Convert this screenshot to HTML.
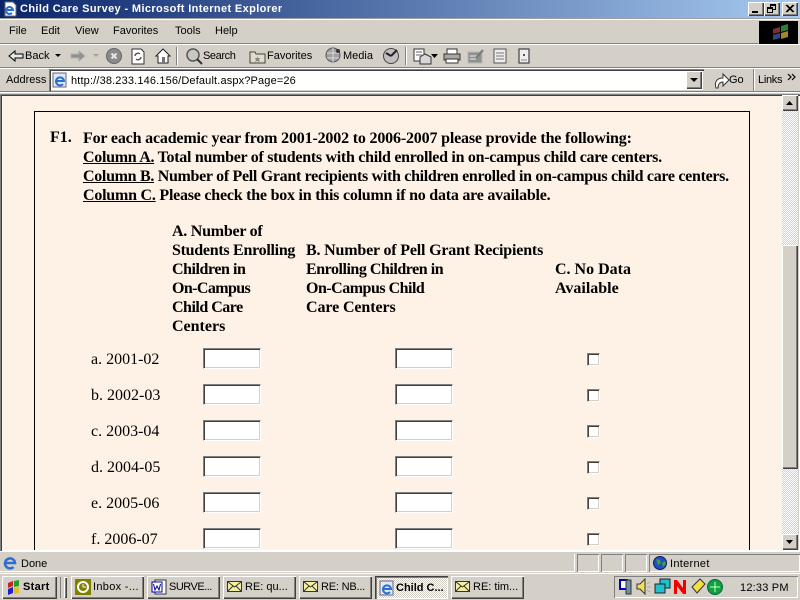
<!DOCTYPE html>
<html><head><meta charset="utf-8"><title>Child Care Survey</title>
<style>
html,body{margin:0;padding:0;width:800px;height:600px;overflow:hidden;background:#d4d0c8}
div,span.t{position:absolute;box-sizing:border-box}
.t{white-space:pre;font:11px/13px "Liberation Sans",sans-serif;color:#000}
.s{font:bold 16px/19px "Liberation Serif",serif;color:#000;white-space:pre;position:absolute}
.n{font:16px/19px "Liberation Serif",serif;color:#000;white-space:pre;position:absolute}
.u{text-decoration:underline}
.in{width:58px;height:21px;background:#fff;border:1px solid;border-color:#808080 #fff #fff #808080;box-shadow:inset 1px 1px 0 #404040,inset -1px -1px 0 #d4d0c8}
.cb{width:13px;height:13px;background:#fff;border:1px solid;border-color:#808080 #fff #fff #808080;box-shadow:inset 1px 1px 0 #404040,inset -1px -1px 0 #d4d0c8}
.btn{background:#d4d0c8;box-shadow:inset 1px 1px 0 #fff,inset -1px -1px 0 #404040,inset -2px -2px 0 #808080}
.sep{background:#fff}
.tb{height:23px;top:576px;width:73px;background:#d4d0c8;box-shadow:inset 1px 1px 0 #fff,inset -1px -1px 0 #404040,inset -2px -2px 0 #808080}
.tb .t{left:22px;top:5px}
svg{position:absolute}
.pn{top:554px;height:18px;box-shadow:inset 1px 1px 0 #808080,inset -1px -1px 0 #fff}
.dith{background-color:#fff;background-image:conic-gradient(#d4d0c8 25%,#fff 0 50%,#d4d0c8 0 75%,#fff 0);background-size:2px 2px}
</style></head><body>
<!-- title bar -->
<div style="left:0;top:0;width:800px;height:18px;background:linear-gradient(90deg,#0a246a 0%,#a6caf0 100%)"></div>
<svg style="left:2px;top:1px" width="16" height="16" viewBox="0 0 16 16"><path d="M3 1h8l3 3v11H3z" fill="#fff" stroke="#667"/><path d="M4 9h7a3.500 3.500 0 1 0-1 3" fill="none" stroke="#2a6fd0" stroke-width="2"/></svg>
<span class="t" style="position:absolute;left:20px;top:3px;color:#fff;font-weight:bold;letter-spacing:.37px">Child Care Survey - Microsoft Internet Explorer</span>
<div class="btn" style="left:748px;top:2px;width:16px;height:14px"><div style="left:4px;top:9px;width:6px;height:2px;background:#000"></div></div>
<div class="btn" style="left:764px;top:2px;width:16px;height:14px"><div style="left:6px;top:2px;width:6px;height:6px;border:1px solid #000;border-top-width:2px"></div><div style="left:3px;top:5px;width:6px;height:6px;border:1px solid #000;border-top-width:2px;background:#d4d0c8"></div></div>
<div class="btn" style="left:782px;top:2px;width:16px;height:14px"><svg width="16" height="14"><path d="M4 3l7 7M5 3l7 7M11 3l-7 7M12 3l-7 7" stroke="#000"/></svg></div>
<!-- menu -->
<div style="left:0;top:18px;width:800px;height:1px;background:#a0a0a0"></div>
<div class="sep" style="left:0;top:19px;width:800px;height:1px"></div>
<span class="t" style="position:absolute;left:9px;top:25px">File</span>
<span class="t" style="position:absolute;left:41px;top:25px">Edit</span>
<span class="t" style="position:absolute;left:75px;top:25px">View</span>
<span class="t" style="position:absolute;left:113px;top:25px">Favorites</span>
<span class="t" style="position:absolute;left:175px;top:25px">Tools</span>
<span class="t" style="position:absolute;left:215px;top:25px">Help</span>
<div style="left:759px;top:21px;width:39px;height:23px;background:#000"></div>
<svg style="left:771px;top:23px" width="20" height="18" viewBox="0 0 20 18"><path d="M2 6l7-2v5l-7 2z" fill="#803028"/><path d="M10 3l7-2v6l-7 2z" fill="#308030"/><path d="M2 12l7-2v5l-7 2z" fill="#304880"/><path d="M10 10l7-2v6l-7 2z" fill="#a08828"/></svg>
<div style="left:0;top:43px;width:758px;height:1px;background:#808080"></div>
<div class="sep" style="left:0;top:44px;width:800px;height:1px"></div>
<!-- toolbar -->
<svg style="left:8px;top:49px" width="16" height="14"><path d="M1 7l6-5v3h8v4H7v3z" fill="#e8e8e8" stroke="#000"/></svg>
<span class="t" style="position:absolute;left:25px;top:50px">Back</span>
<svg style="left:54px;top:53px" width="8" height="6"><path d="M1 1h6L4 4z" fill="#000"/></svg>
<svg style="left:70px;top:49px" width="16" height="14"><path d="M15 7L9 2v3H1v4h8v3z" fill="#909090" stroke="#b0b0b0"/></svg>
<svg style="left:92px;top:53px" width="8" height="6"><path d="M1 1h6L4 4z" fill="#a0a0a0"/></svg>
<svg style="left:106px;top:48px" width="16" height="16"><circle cx="8" cy="8" r="7.500" fill="#8a8a8a" stroke="#666"/><path d="M5.500 5.500l5 5M10.500 5.500l-5 5" stroke="#e8e8e8" stroke-width="2"/></svg>
<svg style="left:130px;top:48px" width="16" height="17"><path d="M2 1h9l3 3v12H2z" fill="#fff" stroke="#333"/><path d="M5 8a3 3 0 0 1 5-2M11 9a3 3 0 0 1-5 2" fill="none" stroke="#555" stroke-width="1.400"/></svg>
<svg style="left:155px;top:48px" width="16" height="16"><path d="M1 8l7-7 7 7h-2v7H3V8z" fill="#fff" stroke="#222"/><rect x="7" y="9" width="3" height="6" fill="#777"/></svg>
<div style="left:176px;top:47px;width:2px;height:18px;background:#808080;border-right:1px solid #fff"></div>
<svg style="left:185px;top:47px" width="18" height="18"><circle cx="8" cy="8" r="6" fill="#c8c8c0" stroke="#555" stroke-width="1.500"/><path d="M12 12l5 5" stroke="#333" stroke-width="2"/></svg>
<span class="t" style="position:absolute;left:203px;top:50px;letter-spacing:-.4px">Search</span>
<svg style="left:249px;top:49px" width="17" height="15"><path d="M1 3h5l1 2h9v9H1z" fill="#e0dcc8" stroke="#444"/><path d="M8 7l1 2 2 0-1 2 1 2-3-1-2 1 1-2-1-2 2 0z" fill="#888"/></svg>
<span class="t" style="position:absolute;left:267px;top:50px">Favorites</span>
<svg style="left:325px;top:47px" width="17" height="17"><circle cx="8" cy="8" r="7" fill="#a0a0a0" stroke="#555"/><path d="M2 6h12M2 11h12M8 1v14" stroke="#ddd"/><circle cx="13" cy="4" r="2" fill="#333"/></svg>
<span class="t" style="position:absolute;left:343px;top:50px">Media</span>
<svg style="left:383px;top:47px" width="17" height="18"><circle cx="8" cy="9" r="7.500" fill="#c0c0c0" stroke="#444"/><path d="M8 9L3 6M8 9l6-6" stroke="#222" stroke-width="2"/></svg>
<div style="left:405px;top:47px;width:2px;height:18px;background:#808080;border-right:1px solid #fff"></div>
<svg style="left:413px;top:48px" width="20" height="18"><rect x="1" y="1" width="10" height="12" fill="#fff" stroke="#333"/><path d="M3 4h6M3 7h6" stroke="#666"/><path d="M7 9l5-3 6 3v7H7z" fill="#d8d8d8" stroke="#333"/></svg>
<svg style="left:431px;top:54px" width="7" height="5"><path d="M0 0h7L3.500 4z" fill="#000"/></svg>
<svg style="left:443px;top:48px" width="18" height="16"><rect x="4" y="1" width="10" height="6" fill="#fff" stroke="#333"/><rect x="1" y="6" width="16" height="6" fill="#a8a8a0" stroke="#333"/><rect x="3" y="11" width="12" height="4" fill="#fff" stroke="#333"/></svg>
<svg style="left:467px;top:48px" width="18" height="16"><rect x="1" y="4" width="14" height="11" fill="#909090" stroke="#b8b8b8"/><path d="M3 8h8M3 11h6" stroke="#eee"/><path d="M9 10l7-8" stroke="#777" stroke-width="2"/></svg>
<svg style="left:492px;top:48px" width="16" height="17"><rect x="2" y="1" width="12" height="14" fill="#eee" stroke="#555"/><path d="M4 5h8M4 8h8M4 11h8" stroke="#777"/></svg>
<svg style="left:518px;top:48px" width="13" height="16"><rect x="1" y="1" width="10" height="14" fill="#eee" stroke="#222"/><path d="M5 7h2M6 6v2" stroke="#222"/><path d="M3 12h6" stroke="#888"/></svg>
<div style="left:0;top:67px;width:800px;height:1px;background:#808080"></div>
<div class="sep" style="left:0;top:68px;width:800px;height:1px"></div>
<!-- address -->
<span class="t" style="position:absolute;left:6px;top:74px">Address</span>
<div style="left:49px;top:69px;width:655px;height:22px;background:#fff;box-shadow:inset 1px 1px 0 #808080,inset 2px 2px 0 #404040,inset -1px -1px 0 #d4d0c8"></div>
<svg style="left:52px;top:72px" width="16" height="16"><rect x="1" y="1" width="13" height="14" fill="#dfe8f8" stroke="#667"/><path d="M4 9h8a4 4 0 1 0-1 3" fill="none" stroke="#2a6fd0" stroke-width="2"/></svg>
<span class="t" style="position:absolute;left:71px;top:75px;letter-spacing:.15px">http://38.233.146.156/Default.aspx?Page=26</span>
<div class="btn" style="left:686px;top:71px;width:16px;height:18px"><svg style="left:3px;top:6px" width="10" height="6"><path d="M1 1h8L5 5z" fill="#000"/></svg></div>
<svg style="left:713px;top:71px" width="18" height="19"><path d="M3 17c-2-6 1-10 7-10V3l6 6-6 6v-4c-3 0-5 2-5 6z" fill="#fff" stroke="#333"/></svg>
<span class="t" style="position:absolute;left:729px;top:74px">Go</span>
<div style="left:753px;top:69px;width:2px;height:22px;background:#808080;border-right:1px solid #fff"></div>
<span class="t" style="position:absolute;left:758px;top:74px;letter-spacing:-.3px">Links</span>
<svg style="left:787px;top:73px" width="10" height="8"><path d="M1 1l3 3-3 3M5 1l3 3-3 3" fill="none" stroke="#000" stroke-width="1.200"/></svg>
<div style="left:0;top:91px;width:800px;height:1px;background:#808080"></div>
<div class="sep" style="left:0;top:92px;width:800px;height:1px"></div>
<!-- content -->
<div style="left:0;top:94px;width:800px;height:457px;background:#d4d0c8;box-shadow:inset 1px 1px 0 #808080,inset 2px 2px 0 #404040,inset -1px -1px 0 #fff"></div>
<div id="page" style="left:2px;top:96px;width:780px;height:454px;background:#fef2e6;overflow:hidden">
<div style="left:32px;top:15px;width:716px;height:460px;border:1px solid #000"></div>
<span class="s" style="left:48px;top:32px">F1.</span>
<span class="s" style="left:81px;top:33px;letter-spacing:-.175px">For each academic year from 2001-2002 to 2006-2007 please provide the following:</span>
<span class="s" style="left:81px;top:52px;letter-spacing:-.29px"><span class="u">Column A.</span> Total number of students with child enrolled in on-campus child care centers.</span>
<span class="s" style="left:81px;top:71px;letter-spacing:-.31px"><span class="u">Column B.</span> Number of Pell Grant recipients with children enrolled in on-campus child care centers.</span>
<span class="s" style="left:81px;top:90px;letter-spacing:-.23px"><span class="u">Column C.</span> Please check the box in this column if no data are available.</span>
<span class="s" style="left:170px;top:126px;letter-spacing:-.25px">A. Number of</span>
<span class="s" style="left:170px;top:145px;letter-spacing:-.28px">Students Enrolling</span>
<span class="s" style="left:170px;top:164px;letter-spacing:-.45px">Children in</span>
<span class="s" style="left:170px;top:183px;letter-spacing:-.6px">On-Campus</span>
<span class="s" style="left:170px;top:202px;letter-spacing:-.5px">Child Care</span>
<span class="s" style="left:170px;top:221px">Centers</span>
<span class="s" style="left:304px;top:145px;letter-spacing:-.18px">B. Number of Pell Grant Recipients</span>
<span class="s" style="left:304px;top:164px;letter-spacing:-.47px">Enrolling Children in</span>
<span class="s" style="left:304px;top:183px;letter-spacing:-.5px">On-Campus Child</span>
<span class="s" style="left:304px;top:202px;letter-spacing:-.1px">Care Centers</span>
<span class="s" style="left:553px;top:164px">C. No Data</span>
<span class="s" style="left:553px;top:183px">Available</span>
<span class="n" style="left:89px;top:254px">a. 2001-02</span><div class="in" style="left:201px;top:252px"></div><div class="in" style="left:393px;top:252px"></div><div class="cb" style="left:585px;top:257px"></div>
<span class="n" style="left:89px;top:290px">b. 2002-03</span><div class="in" style="left:201px;top:288px"></div><div class="in" style="left:393px;top:288px"></div><div class="cb" style="left:585px;top:293px"></div>
<span class="n" style="left:89px;top:326px">c. 2003-04</span><div class="in" style="left:201px;top:324px"></div><div class="in" style="left:393px;top:324px"></div><div class="cb" style="left:585px;top:329px"></div>
<span class="n" style="left:89px;top:362px">d. 2004-05</span><div class="in" style="left:201px;top:360px"></div><div class="in" style="left:393px;top:360px"></div><div class="cb" style="left:585px;top:365px"></div>
<span class="n" style="left:89px;top:398px">e. 2005-06</span><div class="in" style="left:201px;top:396px"></div><div class="in" style="left:393px;top:396px"></div><div class="cb" style="left:585px;top:401px"></div>
<span class="n" style="left:89px;top:434px">f. 2006-07</span><div class="in" style="left:201px;top:432px"></div><div class="in" style="left:393px;top:432px"></div><div class="cb" style="left:585px;top:437px"></div>
</div>
<!-- scrollbar -->
<div class="dith" style="left:782px;top:96px;width:16px;height:453px"></div>
<div class="btn" style="left:782px;top:95px;width:16px;height:16px"><svg width="16" height="16"><path d="M4 10h7L7.500 6z" fill="#000"/></svg></div>
<div class="btn" style="left:782px;top:245px;width:16px;height:224px"></div>
<div class="btn" style="left:782px;top:534px;width:16px;height:16px"><svg width="16" height="16"><path d="M4 6h7l-3.500 4z" fill="#000"/></svg></div>
<div class="sep" style="left:0;top:551px;width:800px;height:1px"></div>
<!-- status -->
<svg style="left:2px;top:554px" width="16" height="17"><path d="M3 9h10a5 5 0 1 0-1.500 4" fill="none" stroke="#2a6fd0" stroke-width="2.500"/></svg>
<span class="t" style="position:absolute;left:21px;top:558px">Done</span>
<div class="pn" style="left:0;width:575px;box-shadow:inset -1px -1px 0 #fff,inset -1px 0 0 #fff"></div>
<div class="pn" style="left:577px;width:22px"></div>
<div class="pn" style="left:601px;width:22px"></div>
<div class="pn" style="left:625px;width:22px"></div>
<div class="pn" style="left:649px;width:151px"></div>
<svg style="left:652px;top:555px" width="16" height="16"><circle cx="8" cy="8" r="6.500" fill="#2050c0" stroke="#102060"/><path d="M4 4l4 1 1 3-3 2zM10 8l3-2 1 3-3 3z" fill="#40a040"/></svg>
<span class="t" style="position:absolute;left:670px;top:558px;letter-spacing:.3px">Internet</span>
<!-- taskbar -->
<div class="sep" style="left:0;top:573px;width:800px;height:1px"></div>
<div class="tb" style="left:2px;width:55px"><svg style="left:4px;top:4px" width="16" height="15"><path d="M2 3l5-2v5l-5 2z" fill="#d02020"/><path d="M8 1l5-1v6l-5 1z" fill="#20a020"/><path d="M2 9l5-2v6l-5 2z" fill="#2020d0"/><path d="M8 8l5-1v6l-5 1z" fill="#e0c020"/></svg><span class="t" style="left:21px;font-weight:bold;letter-spacing:.3px">Start</span></div>
<div style="left:60px;top:577px;width:1px;height:21px;background:#808080"></div>
<div class="btn" style="left:64px;top:577px;width:3px;height:21px"></div>
<div class="tb" style="left:71px"><svg style="left:4px;top:3px" width="16" height="16"><rect width="16" height="16" fill="#808000"/><circle cx="8" cy="8" r="5" fill="none" stroke="#fff" stroke-width="2"/><path d="M8 5v3h3" stroke="#fff" fill="none"/></svg><span class="t" style="letter-spacing:.3px">Inbox -...</span></div>
<div class="tb" style="left:147px"><svg style="left:4px;top:3px" width="16" height="16"><rect x="4" y="1" width="11" height="14" fill="#fff" stroke="#333"/><rect x="1" y="3" width="10" height="10" fill="#fff" stroke="#0000a0"/><path d="M2.500 5l1.500 6 2-4 2 4 1.500-6" fill="none" stroke="#0000a0"/></svg><span class="t" style="letter-spacing:-.5px">SURVE...</span></div>
<div class="tb" style="left:223px"><svg style="left:4px;top:5px" width="16" height="12"><rect x=".5" y=".5" width="14" height="10" fill="#f4f0a0" stroke="#333"/><path d="M1 1l6.500 5L14 1M1 10l5-5M14 10L9 5" fill="none" stroke="#333"/></svg><span class="t">RE: qu...</span></div>
<div class="tb" style="left:299px"><svg style="left:4px;top:5px" width="16" height="12"><rect x=".5" y=".5" width="14" height="10" fill="#f4f0a0" stroke="#333"/><path d="M1 1l6.500 5L14 1M1 10l5-5M14 10L9 5" fill="none" stroke="#333"/></svg><span class="t" style="letter-spacing:-.2px">RE: NB...</span></div>
<div class="tb dith" style="left:375px;box-shadow:inset 1px 1px 0 #404040,inset 2px 2px 0 #808080,inset -1px -1px 0 #fff"><svg style="left:4px;top:4px" width="16" height="16"><rect x="1" y="1" width="13" height="14" fill="#dfe8f8" stroke="#667"/><path d="M4 9h8a4 4 0 1 0-1 3" fill="none" stroke="#2a6fd0" stroke-width="2"/></svg><span class="t" style="font-weight:bold;top:6px;left:21px">Child C...</span></div>
<div class="tb" style="left:451px"><svg style="left:4px;top:5px" width="16" height="12"><rect x=".5" y=".5" width="14" height="10" fill="#f4f0a0" stroke="#333"/><path d="M1 1l6.500 5L14 1M1 10l5-5M14 10L9 5" fill="none" stroke="#333"/></svg><span class="t">RE: tim...</span></div>
<!-- tray -->
<div style="left:614px;top:576px;width:184px;height:22px;box-shadow:inset 1px 1px 0 #808080,inset -1px -1px 0 #fff"></div>
<svg style="left:618px;top:578px" width="110" height="18" viewBox="0 0 110 18">
<path d="M2 2h7v9H2z" fill="#fff" stroke="#0000c0" stroke-width="2"/><rect x="8" y="2" width="5" height="14" fill="#7090a0" stroke="#333"/>
<path d="M19 6h3l5-5v15l-5-5h-3z" fill="#f0e060" stroke="#333"/><path d="M29 6l3-2M29 9h4M29 12l3 2" stroke="#aaa"/>
<rect x="42" y="1" width="10" height="9" fill="#20c0d0" stroke="#222"/><rect x="37" y="6" width="10" height="9" fill="#20c0d0" stroke="#222"/>
<path d="M56 2h3l6 8V2h3v14h-3l-6-8v8h-3z" fill="#f00000"/>
<path d="M74 9l8-8 5 5-8 9z" fill="#f0e040" stroke="#333"/>
<circle cx="97" cy="9" r="7.500" fill="#10a040" stroke="#064"/><path d="M92 9h10M97 4v10" stroke="#cfc"/>
</svg>
<span class="t" style="position:absolute;left:740px;top:582px;letter-spacing:.2px">12:33 PM</span>
</body></html>
